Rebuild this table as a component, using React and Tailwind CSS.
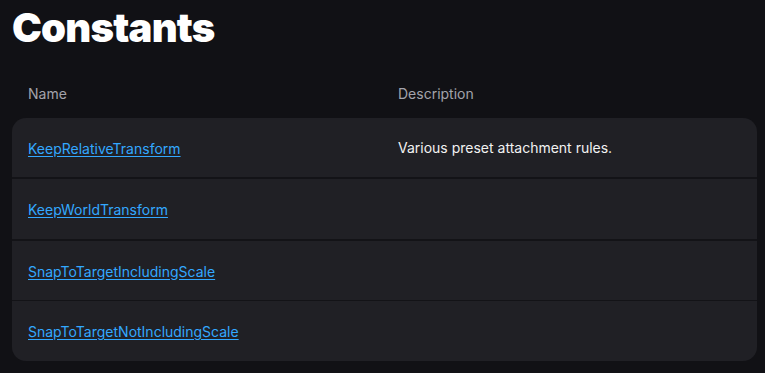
const constants = [
  { name: 'KeepRelativeTransform', description: 'Various preset attachment rules.', h: 'h-[61px]', sep: 'border-b-2' },
  { name: 'KeepWorldTransform', description: '', h: 'h-[62px]', sep: 'border-b-2' },
  { name: 'SnapToTargetIncludingScale', description: '', h: 'h-[60px]', sep: 'border-b' },
  { name: 'SnapToTargetNotIncludingScale', description: '', h: 'h-[60px]', sep: '' },
];

const App = () => {
  return (
    <div
      className="min-h-screen bg-[#111115] pl-3 pr-2 text-white"
      style={{ fontFamily: 'Inter, "Noto Sans", sans-serif' }}
    >
      <h1 className="text-[40px] font-black leading-[56px] tracking-[-0.8px]">Constants</h1>

      {/* Column headers */}
      <div className="grid grid-cols-[386px_1fr] pt-[28px] pb-[14px] text-sm leading-5 text-[#a3a3ab]">
        <div className="pl-4">Name</div>
        <div>Description</div>
      </div>

      {/* Rows */}
      <div className="overflow-hidden rounded-[14px] bg-[#202025]">
        {constants.map((c) => (
          <div
            key={c.name}
            className={`grid grid-cols-[386px_1fr] items-center border-[#131317] ${c.h} ${c.sep}`}
          >
            <div className="pl-4">
              <a href="#" className="text-sm text-[#33a8ff] underline underline-offset-2">
                {c.name}
              </a>
            </div>
            <div className="text-sm text-[#f2f2f2]">{c.description}</div>
          </div>
        ))}
      </div>
    </div>
  );
};

export default App;
